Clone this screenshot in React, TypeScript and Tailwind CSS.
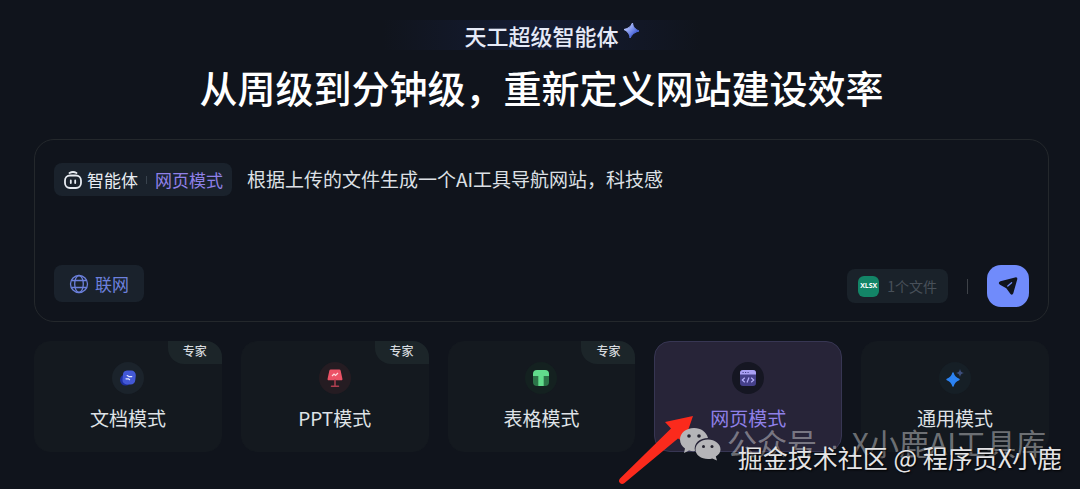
import React from "react";

type Mode = {
  label: string;
  icon: React.ReactNode;
  circle: string;
  expert?: boolean;
  active?: boolean;
};

const DocIcon = () => (
  <svg viewBox="0 0 18 18" className="size-[18px]" aria-hidden="true">
    <circle cx="6.5" cy="11" r="5.5" fill="#1d2fa0" />
    <path d="M8 1.500h4.200A4.600 4.600 0 0 1 16.800 6.500l-.5 4.500A5 5 0 0 1 11.500 15.500H8A4.500 4.500 0 0 1 3.500 10.500l.4-4.500A4.500 4.500 0 0 1 8 1.500z" fill="#4358d6" />
    <path d="M8.200 6.600l1.600 1h3M7 9.800h2.400l1.200.9" fill="none" stroke="#e4e8ff" strokeWidth="1.200" strokeLinecap="round" strokeLinejoin="round" />
  </svg>
);

const PptIcon = () => (
  <svg viewBox="0 0 18 20" className="h-5 w-[18px]" aria-hidden="true">
    <path d="M4.800 1.500h8.400c.8 0 1.300.4 1.500 1.200l1.700 8c.2 1-.3 1.600-1.200 1.600H2.800c-.9 0-1.400-.6-1.200-1.600l1.700-8c.2-.8.700-1.200 1.500-1.200z" fill="#ec5266" />
    <path d="M6 8l2-2 1.500 1.500L12 5" fill="none" stroke="#ffd8dc" strokeWidth="1.200" />
    <path d="M9 12v6M5.500 18.300h7" stroke="#b03f50" strokeWidth="1.500" strokeLinecap="round" />
  </svg>
);

const TableIcon = () => (
  <svg viewBox="0 0 18 18" className="size-[18px]" aria-hidden="true">
    <path d="M1 6.500h16V13a4 4 0 0 1-4 4H5a4 4 0 0 1-4-4z" fill="#2c7448" />
    <path d="M5 1h8a4 4 0 0 1 4 4v2H1V5a4 4 0 0 1 4-4z" fill="#62dc8c" />
    <path d="M6.300 6h5.400v11H6.300z" fill="#62dc8c" />
  </svg>
);

const WebIcon = () => (
  <svg viewBox="0 0 18 18" className="size-[18px]" aria-hidden="true">
    <rect x="1" y="1" width="16" height="16" rx="3" fill="#45408a" />
    <path d="M4 1h10a3 3 0 0 1 3 3v1.500H1V4a3 3 0 0 1 3-3z" fill="#a9a0f4" />
    <path d="M3.500 3.500h1.200M6 3.500h1.200M8.500 3.500h1.200" stroke="#45408a" strokeWidth="1.200" />
    <path d="M5.800 8.700L3.300 11l2.500 2.300M12.200 8.700l2.500 2.300-2.500 2.300M10 8.500l-2 5" fill="none" stroke="#b5aefa" strokeWidth="1.200" />
  </svg>
);

const GeneralIcon = () => (
  <svg viewBox="0 0 20 20" className="size-5" aria-hidden="true">
    <path d="M8 5c1 3.700 2.300 5.300 6 6.500-3.700 1.200-5 2.800-6 6.500-1-3.700-2.300-5.300-6-6.500 3.700-1.200 5-2.800 6-6.500z" fill="#2c83f3" stroke="#2c83f3" strokeWidth="1.400" strokeLinejoin="round" />
    <path d="M15 1c.5 2.400 1.400 3.300 4 4-2.600.7-3.500 1.600-4 4-.5-2.400-1.400-3.300-4-4 2.600-.7 3.500-1.600 4-4z" fill="#3c4e7c" />
  </svg>
);

const modes: Mode[] = [
  { label: "文档模式", icon: <DocIcon />, circle: "bg-[#1b232b]", expert: true },
  { label: "PPT模式", icon: <PptIcon />, circle: "bg-[#251c22]", expert: true },
  { label: "表格模式", icon: <TableIcon />, circle: "bg-[#142120]", expert: true },
  { label: "网页模式", icon: <WebIcon />, circle: "bg-[#151622]", active: true },
  { label: "通用模式", icon: <GeneralIcon />, circle: "bg-[#161f26]" },
];

function ModeCard({ mode }: { mode: Mode }) {
  return (
    <button
      type="button"
      aria-pressed={!!mode.active}
      className={
        mode.active
          ? "relative flex h-[111px] flex-1 flex-col items-center rounded-2xl border border-[#373653] bg-[#272438] pt-5 text-[#8f80e8]"
          : "relative flex h-[111px] flex-1 flex-col items-center rounded-2xl border border-[#14191f] bg-[#14191f] pt-5 text-[#dfe2e6]"
      }
    >
      {mode.expert && (
        <span className="absolute -top-px -right-px rounded-tr-2xl rounded-bl-2xl bg-[#1c2529] px-[15px] pt-px pb-1 text-[12px] leading-[18px] font-medium text-[#d5d9dd]">
          专家
        </span>
      )}
      <span className={`flex size-8 items-center justify-center rounded-full ${mode.circle}`}>{mode.icon}</span>
      <span className="mt-2.5 text-[19px] leading-7">{mode.label}</span>
    </button>
  );
}

export default function App() {
  return (
    <div className="relative min-h-screen overflow-hidden bg-[#10141c] pt-5 pr-[31px] pl-[34px] font-['Noto_Sans_CJK_SC',sans-serif] text-white">
      <header className="flex flex-col items-center">
        <div className="flex w-[320px] justify-center bg-linear-to-r from-transparent via-[#151c34] to-transparent">
          <p className="relative text-[22px] leading-[30px] font-medium text-[#e6eaf8]">
            天工超级智能体
            <svg viewBox="0 0 18 18" className="absolute top-0.5 -right-[21px] size-[18px]" aria-hidden="true">
              <defs>
                <linearGradient id="spark" x1="0" y1="0" x2="1" y2="1">
                  <stop offset="0.200" stopColor="#b9c6ff" />
                  <stop offset="0.700" stopColor="#4b67dc" />
                </linearGradient>
              </defs>
              <path d="M10.500 1c.8 4 2 5.800 6.500 8-4.500 1.300-6.500 2.800-9 7-.5-4.300-1.800-6-6-8.500C6.500 6.500 8.500 5 10.500 1z" fill="url(#spark)" stroke="url(#spark)" strokeLinejoin="round" />
            </svg>
          </p>
        </div>
        <h1 className="mt-2.5 text-[38px] leading-[54px] font-medium">从周级到分钟级，重新定义网站建设效率</h1>
      </header>

      <form className="mt-[25px] rounded-[20px] border border-[#24282c] px-[19px] pt-[23px] pb-3.5" onSubmit={(e) => e.preventDefault()}>
        <div className="flex items-start gap-[15px]">
          <div className="flex h-[33px] shrink-0 items-center rounded-lg bg-[#1a222c] px-[9px] text-[17px]">
            <svg viewBox="0 0 20 20" className="size-5" fill="none" stroke="#e8ecf2" strokeWidth="1.800" strokeLinecap="round" aria-hidden="true">
              <rect x="2" y="5.500" width="16" height="12.500" rx="5" />
              <path d="M6.500 3Q10 1 13.500 3M7.800 10.500v2.600M12.200 10.500v2.600" />
            </svg>
            <span className="ml-1 text-[#e8ecf2]">智能体</span>
            <span className="mx-2 h-2 w-px bg-[#39434e]" />
            <span className="text-[#8f80e8]">网页模式</span>
          </div>
          <textarea
            aria-label="任务描述"
            defaultValue="根据上传的文件生成一个AI工具导航网站，科技感"
            className="h-[102px] min-w-0 flex-1 resize-none bg-transparent pt-0.5 text-[19px] leading-7 text-[#dde0e5] outline-none"
          />
        </div>
        <div className="flex items-start">
          <button type="button" className="flex h-[37px] items-center gap-1.5 rounded-lg bg-[#1a222c] px-[15px] text-[17px] text-[#6c80dc]">
            <svg viewBox="0 0 20 20" className="size-5" fill="none" stroke="currentColor" strokeWidth="1.300" aria-hidden="true">
              <circle cx="10" cy="10" r="8.500" />
              <ellipse cx="10" cy="10" rx="4.300" ry="8.500" />
              <path d="M2.500 6.500h15M2.500 13.500h15" />
            </svg>
            联网
          </button>
          <div className="ml-auto flex items-center">
            <button type="button" className="flex h-[34px] items-center rounded-lg bg-[#1a222a] px-[11px] text-[14px] text-[#485059]">
              <span className="mr-2 flex size-[21px] items-center justify-center rounded-md bg-[#138567] font-['Open_Sans',sans-serif] text-[7px] font-bold text-white">
                XLSX
              </span>
              1个文件
            </button>
            <span className="mx-[19px] h-[15px] w-px bg-[#3e4248]" />
            <button type="submit" aria-label="发送" className="flex size-[42px] items-center justify-center rounded-[14px] bg-[#708bfb]">
              <svg viewBox="0 0 22 22" className="size-[22px]" aria-hidden="true">
                <path d="M18 2.400Q20.800 1.700 20.200 4.500L16.300 18.200Q15.300 20.800 13.300 18.800L9.300 13.200 3 9.700Q.4 7.700 3.400 6.200z" fill="#10141c" />
                <path d="M10.800 11l3.800-3.300" stroke="#708bfb" strokeWidth="1.300" strokeLinecap="round" />
              </svg>
            </button>
          </div>
        </div>
      </form>

      <div className="mt-[19px] flex gap-[19px]">
        {modes.map((mode) => (
          <ModeCard key={mode.label} mode={mode} />
        ))}
      </div>

      <svg viewBox="0 0 78 72" className="absolute top-[414px] left-[617px] h-[72px] w-[78px]" aria-hidden="true">
        <path d="M76 2L48 8l6 6.500L3 64.500q-2 2.500 0 4.500 2 2 4.500 0L61 24.500l6 3.500z" fill="#fb2a1c" />
      </svg>

      <div className="pointer-events-none absolute right-[34px] bottom-6 flex items-center gap-1.5 text-[30px] leading-10 whitespace-nowrap text-white/40">
        <svg viewBox="0 0 42 34" className="h-[34px] w-[42px]" aria-hidden="true">
          <path d="M15 1C7 1 1 6 1 12.500c0 4 2 7 5 9L5 26l5-2.500c2 .6 4 .8 6 .6C14 16 21 11 29 11 27.500 5 22 1 15 1z" fill="#b5b5b8" />
          <path d="M29 12.500c-7 0-12.500 4.500-12.500 10S22 32 29 32c1.500 0 3-.2 4.300-.6L38 33.500l-1.200-4c2.900-1.800 4.700-4 4.700-7 0-5.500-5.500-10-12.500-10z" fill="#b5b5b8" />
          <g fill="#24232f">
            <circle cx="10" cy="9" r="1.800" />
            <circle cx="20" cy="9" r="1.800" />
            <circle cx="24.500" cy="19.500" r="1.500" />
            <circle cx="33" cy="19.500" r="1.500" />
          </g>
        </svg>
        <span>
          公众号<span className="mx-1 font-['Liberation_Sans',sans-serif]"> · </span>X小鹿AI工具库
        </span>
      </div>
      <div className="pointer-events-none absolute right-[18px] bottom-3.5 text-[25px] leading-9 whitespace-nowrap text-[#e4e4e6] [text-shadow:1px_1px_2px_#000]">
        掘金技术社区 @ 程序员X小鹿
      </div>
    </div>
  );
}
